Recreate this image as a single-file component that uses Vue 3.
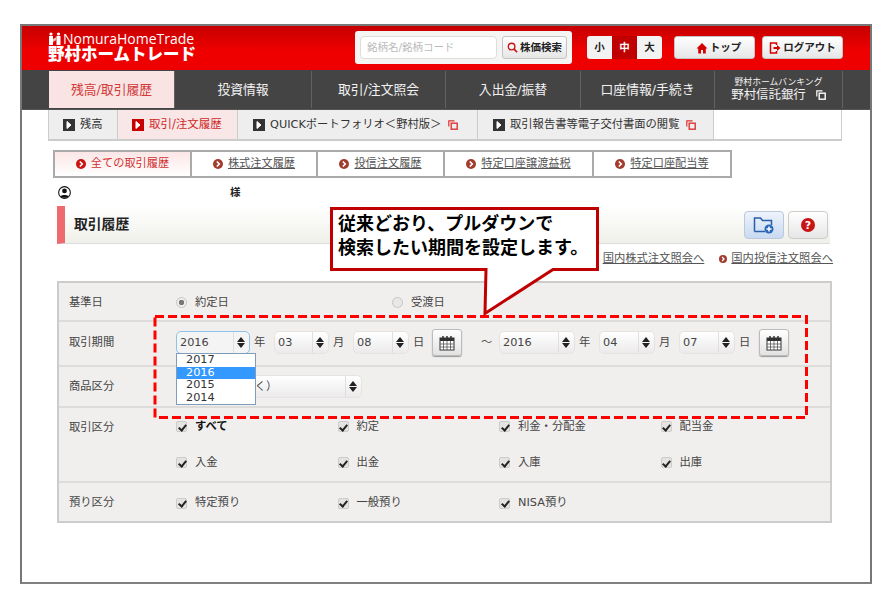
<script setup>
const navs = ['投資情報', '取引/注文照会', '入出金/振替', '口座情報/手続き']
const tabs = ['株式注文履歴', '投信注文履歴', '特定口座譲渡益税', '特定口座配当等']
const kinds = [
  [{ t: 'すべて', b: true }, { t: '約定' }, { t: '利金・分配金' }, { t: '配当金' }],
  [{ t: '入金' }, { t: '出金' }, { t: '入庫' }, { t: '出庫' }]
]
const azukari = ['特定預り', '一般預り', 'NISA預り']
const years = ['2017', '2016', '2015', '2014']
</script>

<template>
  <div class="frame">
    <header class="head">
      <div class="logo">
        <div class="logo-en">
          <svg class="logo-ico" viewBox="0 0 14 13"><g fill="#fff"><circle cx="3" cy="2" r="1.6"/><circle cx="10.5" cy="2" r="1.6"/><path d="M1 4h4v9H1zM8.500 4h4v9h-4z"/></g><path d="M5 7l3.500-2v3l-3.500 2z" fill="#f7b7b7"/></svg>
          <span>NomuraHomeTrade</span>
        </div>
        <div class="logo-jp">野村ホームトレード</div>
      </div>
      <div class="search">
        <div class="search-in">銘柄名/銘柄コード</div>
        <button class="btn search-btn">
          <svg class="ico11" viewBox="0 0 12 12"><circle cx="5" cy="5" r="3.600" fill="none" stroke="#d01010" stroke-width="1.500"/><path d="M7.700 7.700L11 11" stroke="#d01010" stroke-width="1.800"/></svg>
          株価検索
        </button>
      </div>
      <div class="size">
        <span>小</span><span class="on">中</span><span>大</span>
      </div>
      <button class="btn top-btn">
        <svg class="ico12" viewBox="0 0 12 12"><path d="M6 1L0.500 6.500H2.200V11.500H5V8H7V11.500H9.800V6.500H11.500z" fill="#d40000"/></svg>
        トップ
      </button>
      <button class="btn out-btn">
        <svg class="ico12" viewBox="0 0 12 12"><path d="M7.500 3V1H1.500V11H7.500V9" fill="none" stroke="#d40000" stroke-width="1.500"/><path d="M4.500 5H8V3L11.500 6 8 9V7H4.500z" fill="#d40000"/></svg>
        ログアウト
      </button>
    </header>

    <nav class="nav">
      <a class="nav-item active">残高/取引履歴</a>
      <a v-for="n in navs" :key="n" class="nav-item">{{ n }}</a>
      <a class="nav-item bank">
        <small>野村ホームバンキング</small>
        <span>野村信託銀行
          <svg class="ext" viewBox="0 0 10 10"><path d="M.8 6.500V.8H6.500" fill="none" stroke="#fff" stroke-width="1.200"/><rect x="3.200" y="3.200" width="6" height="6" fill="none" stroke="#fff" stroke-width="1.400"/></svg>
        </span>
      </a>
    </nav>

    <div class="sub">
      <a class="sub-item s1"><svg class="box" viewBox="0 0 12 12"><rect width="12" height="12" fill="#333"/><path d="M4 2.500L8 6 4 9.500z" fill="#fff" stroke="#fff"/></svg>残高</a>
      <a class="sub-item s2 active"><svg class="box" viewBox="0 0 12 12"><rect width="12" height="12" fill="#c80000"/><path d="M4 2.500L8 6 4 9.500z" fill="#fff" stroke="#fff"/></svg>取引/注文履歴</a>
      <a class="sub-item s3"><svg class="box" viewBox="0 0 12 12"><rect width="12" height="12" fill="#333"/><path d="M4 2.500L8 6 4 9.500z" fill="#fff" stroke="#fff"/></svg>QUICKポートフォリオ＜野村版＞<svg class="ext" viewBox="0 0 10 10"><path d="M.8 6.500V.8H6.500" fill="none" stroke="#d33" stroke-width="1.200"/><rect x="3.200" y="3.200" width="6" height="6" fill="none" stroke="#d33" stroke-width="1.400"/></svg></a>
      <a class="sub-item s4"><svg class="box" viewBox="0 0 12 12"><rect width="12" height="12" fill="#333"/><path d="M4 2.500L8 6 4 9.500z" fill="#fff" stroke="#fff"/></svg>取引報告書等電子交付書面の閲覧<svg class="ext" viewBox="0 0 10 10"><path d="M.8 6.500V.8H6.500" fill="none" stroke="#d33" stroke-width="1.200"/><rect x="3.200" y="3.200" width="6" height="6" fill="none" stroke="#d33" stroke-width="1.400"/></svg></a>
      <div class="sub-item s5"></div>
    </div>

    <div class="tabs">
      <a class="tab active"><svg class="dot" viewBox="0 0 10 10"><circle cx="5" cy="5" r="5" fill="#cc1111"/><path d="M3.800 2.500L6.300 5 3.800 7.500" fill="none" stroke="#fff" stroke-width="1.600"/></svg>全ての取引履歴</a>
      <a v-for="t in tabs" :key="t" class="tab"><svg class="dot" viewBox="0 0 10 10"><circle cx="5" cy="5" r="5" fill="#a23c2c"/><path d="M3.800 2.500L6.300 5 3.800 7.500" fill="none" stroke="#fff" stroke-width="1.600"/></svg><span class="u">{{ t }}</span></a>
    </div>

    <div class="user">
      <svg class="user-ico" viewBox="0 0 12 12"><circle cx="6" cy="6" r="5.400" fill="#fff" stroke="#111"/><circle cx="6" cy="4.600" r="2.200" fill="#111"/><path d="M2.200 9.700C3 7.800 9 7.800 9.800 9.700 8 11.200 4 11.200 2.200 9.700z" fill="#111"/></svg>
      <b>様</b>
    </div>

    <div class="title">
      <h1>取引履歴</h1>
      <button class="tbtn blue">
        <svg class="tico" viewBox="0 0 22 18"><path d="M1.500 15.500V2h6l2 2.500h9V9" fill="none" stroke="#2a5ea8" stroke-width="1.500"/><path d="M1.500 15.500H12" stroke="#2a5ea8" stroke-width="1.500"/><circle cx="16" cy="13" r="4.500" fill="#2a68b8"/><path d="M13.500 13h5M16 10.500v5" stroke="#fff" stroke-width="1.500"/></svg>
      </button>
      <button class="tbtn">
        <svg class="qico" viewBox="0 0 14 14"><circle cx="7" cy="7" r="7" fill="#c81414"/><text x="7" y="11" text-anchor="middle" class="qmark">?</text></svg>
      </button>
    </div>

    <div class="links">
      <a><svg class="dot" viewBox="0 0 10 10"><circle cx="5" cy="5" r="5" fill="#a23c2c"/><path d="M3.800 2.500L6.300 5 3.800 7.500" fill="none" stroke="#fff" stroke-width="1.600"/></svg><span class="u">国内株式注文照会へ</span></a>
      <a><svg class="dot" viewBox="0 0 10 10"><circle cx="5" cy="5" r="5" fill="#a23c2c"/><path d="M3.800 2.500L6.300 5 3.800 7.500" fill="none" stroke="#fff" stroke-width="1.600"/></svg><span class="u">国内投信注文照会へ</span></a>
    </div>

    <section class="panel">
      <div class="row r1">
        <div class="lab">基準日</div>
        <div class="radios">
          <label class="radio"><i class="rd on"></i>約定日</label>
          <label class="radio"><i class="rd"></i>受渡日</label>
        </div>
      </div>

      <div class="row r2">
        <div class="lab">取引期間</div>
        <div class="dates">
          <div class="sel focus y1">2016<i class="arr"></i></div><span class="unit">年</span>
          <div class="sel m">03<i class="arr"></i></div><span class="unit">月</span>
          <div class="sel d">08<i class="arr"></i></div><span class="unit">日</span>
          <button class="cal first">
            <svg class="cal-ico" viewBox="0 0 16 16"><rect x="1" y="3" width="14" height="12" fill="#fff" stroke="#333"/><rect x="1" y="3" width="14" height="3" fill="#333"/><path d="M4 1v3M8 1v3M12 1v3" stroke="#333" stroke-width="1.500"/><path d="M1 9h14M1 12h14M4.500 6v9M8 6v9M11.500 6v9" stroke="#555" stroke-width=".8"/></svg>
          </button>
          <span class="tilde">〜</span>
          <div class="sel y2">2016<i class="arr"></i></div><span class="unit">年</span>
          <div class="sel d">04<i class="arr"></i></div><span class="unit">月</span>
          <div class="sel d">07<i class="arr"></i></div><span class="unit">日</span>
          <button class="cal">
            <svg class="cal-ico" viewBox="0 0 16 16"><rect x="1" y="3" width="14" height="12" fill="#fff" stroke="#333"/><rect x="1" y="3" width="14" height="3" fill="#333"/><path d="M4 1v3M8 1v3M12 1v3" stroke="#333" stroke-width="1.500"/><path d="M1 9h14M1 12h14M4.500 6v9M8 6v9M11.500 6v9" stroke="#555" stroke-width=".8"/></svg>
          </button>
        </div>
      </div>

      <div class="row r3">
        <div class="lab">商品区分</div>
        <div class="sel wide">全商品（株除く）<i class="arr"></i></div>
      </div>

      <div class="row r4">
        <div class="lab">取引区分</div>
        <div class="checks">
          <template v-for="(line, i) in kinds" :key="i">
            <label v-for="k in line" :key="k.t" class="ck" :class="{ strong: k.b }"><i class="box-ck"></i>{{ k.t }}</label>
          </template>
        </div>
      </div>

      <div class="row r5">
        <div class="lab">預り区分</div>
        <div class="checks">
          <label v-for="a in azukari" :key="a" class="ck"><i class="box-ck"></i>{{ a }}</label>
        </div>
      </div>

      <ul class="drop">
        <li v-for="y in years" :key="y" :class="{ hit: y === '2016' }">{{ y }}</li>
      </ul>
    </section>

    <svg class="marks" viewBox="0 0 848 556">
      <rect x="133" y="290.500" width="651.500" height="101" fill="none" stroke="#ff0000" stroke-width="3" stroke-dasharray="9 4"/>
      <path d="M309.500 182.500H575.500V243.500H531L463 287.500 464 243.500H309.500z" fill="#fff" stroke="#c00000" stroke-width="3"/>
    </svg>
    <p class="callout">従来どおり、プルダウンで<br>検索したい期間を設定します。</p>
  </div>
</template>

<style>
body { background: #fff; }
</style>

<style scoped>
* { box-sizing: border-box; }
.frame {
  position: relative;
  width: 852px;
  height: 560px;
  margin: 24px 0 0 20px;
  border: 2px solid #777;
  border-bottom-color: #808080;
  background: #fff;
  color: #444;
  font: 11.300px/1.200 "DejaVu Sans", "Noto Sans CJK JP", sans-serif;
  overflow: hidden;
}
a { color: inherit; text-decoration: none; }
button { font: inherit; padding: 0; }
i { display: block; }

.head {
  display: flex;
  align-items: flex-start;
  height: 44px;
  padding-left: 26px;
  background: linear-gradient(#c60000, #ee0000 55%);
}
.logo { width: 307px; padding-top: 6px; color: #fff; }
.logo-en { display: flex; align-items: center; gap: 1px; height: 13px; font: 14px/13px "Open Sans", sans-serif; }
.logo-ico { width: 14px; height: 13px; }
.logo-jp { font: 900 16.500px/17px "Noto Sans CJK JP", sans-serif; }
.search {
  display: flex;
  gap: 5px;
  width: 217px;
  height: 33px;
  margin-top: 5px;
  padding: 5px;
  background: #f5f5f3;
  border-radius: 3px;
}
.search-in {
  width: 137px;
  height: 23px;
  padding-left: 6px;
  border: 1px solid #ddd;
  border-radius: 4px;
  background: #fff;
  color: #bbb;
  font-size: 10.500px;
  line-height: 21px;
}
.btn {
  display: flex;
  align-items: center;
  justify-content: center;
  height: 23px;
  border: 1px solid #c4c4c4;
  border-radius: 3px;
  background: linear-gradient(#fff, #e6e6e6);
  color: #222;
  font-size: 10.500px;
  font-weight: 700;
}
.search-btn { width: 65px; gap: 2px; }
.ico11 { width: 11px; height: 11px; }
.ico12 { width: 12px; height: 12px; }
.size {
  display: flex;
  width: 75px;
  height: 23px;
  margin: 10px 12px 0 15px;
  border-radius: 3px;
  overflow: hidden;
  background: #f3f3f3;
  color: #222;
  font-size: 10.500px;
  font-weight: 700;
  line-height: 23px;
  text-align: center;
}
.size span { flex: 1; }
.size .on { background: #c00000; color: #fff; }
.top-btn { width: 81px; margin-top: 10px; gap: 2px; padding-left: 8px; }
.out-btn { width: 81px; margin: 10px 0 0 7px; gap: 2px; }

.nav {
  display: grid;
  grid-template-columns: 126px 137px 134px 135px 134px 128px;
  height: 40px;
  padding: 1px 28px 1px 27px;
  background: #444;
  border-bottom: 1px solid #555;
}
.nav-item {
  display: flex;
  align-items: center;
  justify-content: center;
  border-right: 1px solid #626262;
  color: #f2f2f2;
  font-size: 12.800px;
}
.nav-item.active { background: #f9e3e3; color: #d23a3a; }
.bank { flex-direction: column; line-height: 14px; }
.bank small { font-size: 8.800px; line-height: 11px; }
.bank span { display: flex; align-items: center; gap: 10px; font-size: 12.400px; }
.ext { width: 10px; height: 10px; flex: none; }

.sub {
  display: grid;
  grid-template-columns: 70px 120px 240px 236px 128px;
  width: 794px;
  height: 31px;
  margin-left: 26px;
  background: #eee;
  border-bottom: 2px solid #ccc;
}
.sub-item {
  display: flex;
  align-items: center;
  gap: 5px;
  padding-left: 14px;
  border-right: 1px solid #ccc;
  color: #333;
}
.sub-item:first-child { border-left: 1px solid #ccc; }
.s3, .s4 { padding-left: 15px; }
.sub-item.active { background: #f9e6e6; color: #d02a2a; font-size: 11.500px; }
.s5 { background: #fff; }
.box { width: 12px; height: 12px; flex: none; }
.s3 .ext, .s4 .ext { margin-left: 2px; }

.tabs {
  display: grid;
  grid-template-columns: 137px 126px 127px 149px 136px;
  width: 679px;
  height: 28px;
  margin: 9px 0 0 31px;
  border: 2px solid #aaa;
}
.tab {
  display: flex;
  align-items: center;
  justify-content: center;
  gap: 5px;
  border-right: 2px solid #aaa;
  color: #555;
  font-size: 11.200px;
}
.tab:last-child { border-right: 0; }
.tab.active { background: linear-gradient(#fce6e6, #fff); color: #d23030; }
.dot { width: 10px; height: 10px; flex: none; }
.u { text-decoration: underline; }

.user { display: flex; align-items: center; height: 14px; margin: 7px 0 0 36px; color: #222; font-size: 10.500px; }
.user-ico { width: 13px; height: 13px; }
.user b { margin-left: 159px; }

.title {
  display: flex;
  align-items: center;
  gap: 4px;
  width: 773px;
  height: 38px;
  margin: 7px 0 0 35px;
  padding-right: 2px;
  border-left: 8px solid #ee6a6f;
  border-bottom: 1px solid #ddd;
  background: linear-gradient(#fff, #f0f0ea);
}
h1 { flex: 1; margin: 0; padding-left: 9px; color: #222; font-size: 13.800px; font-weight: 700; }
.tbtn {
  display: flex;
  align-items: center;
  justify-content: center;
  width: 40px;
  height: 28px;
  border: 1px solid #ccc;
  border-radius: 4px;
  background: linear-gradient(#fff, #e6e6e6);
}
.tbtn.blue { background: linear-gradient(#eef3fb, #c8daf2); border-color: #bcc9dc; }
.tico { width: 22px; height: 18px; }
.qico { width: 14px; height: 14px; }
.qmark { fill: #fff; font: 700 11px "DejaVu Sans", sans-serif; }

.links {
  display: flex;
  justify-content: flex-end;
  gap: 15px;
  height: 16px;
  margin-top: 7px;
  padding-right: 37px;
  color: #555;
  font-size: 11.300px;
}
.links a { display: flex; align-items: center; gap: 4px; }
.links .dot { width: 8px; height: 8px; }

.panel {
  position: relative;
  width: 775px;
  height: 242px;
  margin: 14px 0 0 35px;
  border: 2px solid #ccc;
  background: #f1efee;
}
.row {
  display: grid;
  grid-template-columns: 107px 1fr;
  align-items: center;
  padding-left: 10px;
  border-bottom: 2px solid #dedcdb;
}
.r1 { height: 39px; padding-top: 2px; }
.r2 { height: 45px; }
.r3 { height: 41px; }
.r4 { height: 75px; }
.r5 { height: 38px; padding-top: 2px; border-bottom: 0; }
.lab { color: #444; }
.r4 .lab { align-self: start; margin-top: 13px; }
.r2 .lab { margin-top: -1px; }
.radios { display: grid; grid-template-columns: 216px 1fr; }
.radio { display: flex; align-items: center; gap: 8px; }
.rd {
  width: 11px;
  height: 11px;
  border: 1px solid #c4c4c4;
  border-radius: 50%;
  background: #e8e8e8;
}
.rd.on { background: radial-gradient(#777 0 2.500px, #eee 3px); }

.dates { display: flex; align-items: center; margin-top: -2px; }
.sel {
  position: relative;
  height: 23px;
  padding-left: 3px;
  border: 1px solid #e6e4e3;
  border-radius: 5px;
  background: linear-gradient(#fff, #eceaea);
  color: #444;
  font-size: 11.300px;
  line-height: 21px;
}
.sel.focus { border-color: #8cc4ea; background: #f4f4f4; }
.y1 { width: 74px; }
.y2 { width: 76px; }
.m { width: 55px; }
.d { width: 56px; }
.wide { width: 186px; padding-left: 10px; }
.arr {
  position: absolute;
  top: 0;
  right: 0;
  width: 16px;
  height: 21px;
  border-left: 1px solid #e0dede;
}
.arr::before, .arr::after {
  content: "";
  position: absolute;
  left: 3px;
  border-left: 4px solid transparent;
  border-right: 4px solid transparent;
}
.arr::before { top: 5px; border-bottom: 5px solid #222; }
.arr::after { top: 11px; border-top: 5px solid #222; }
.unit { width: 20px; margin-left: 4px; flex: none; color: #444; }
.cal {
  display: flex;
  align-items: center;
  justify-content: center;
  width: 30px;
  height: 27px;
  border: 1px solid #bbb;
  border-radius: 3px;
  background: linear-gradient(#fff, #e2e2e2);
  box-shadow: 0 1px 1px #999;
}
.cal.first { margin-left: -1px; }
.cal-ico { width: 16px; height: 16px; }
.tilde { width: 18px; margin-left: 19px; color: #555; }

.checks { display: grid; grid-template-columns: repeat(4, 161.500px); row-gap: 22px; }
.ck { display: flex; align-items: center; gap: 8px; height: 14px; color: #444; }
.ck.strong { color: #111; font-weight: 700; }
.box-ck {
  position: relative;
  width: 11px;
  height: 11px;
  border: 1px solid #ccc;
  border-radius: 2px;
  background: #e5e3e2;
}
.box-ck::after {
  content: "";
  position: absolute;
  left: 2.500px;
  top: .5px;
  width: 3px;
  height: 6px;
  border: solid #222;
  border-width: 0 2px 2px 0;
  transform: rotate(40deg);
}

.drop {
  position: absolute;
  left: 117px;
  top: 70px;
  width: 80px;
  margin: 0;
  padding: 0;
  list-style: none;
  border: 1px solid #7f9db9;
  background: #fff;
  color: #333;
  font-size: 11.300px;
  line-height: 12.500px;
}
.drop li { padding-left: 9px; }
.drop .hit { background: #3399ff; color: #fff; }

.marks { position: absolute; left: 0; top: 0; width: 848px; height: 556px; pointer-events: none; }
.callout {
  position: absolute;
  left: 316px;
  top: 184px;
  margin: 0;
  color: #000;
  font: 700 18px/24px "Noto Sans CJK JP", sans-serif;
  white-space: nowrap;
}
</style>
